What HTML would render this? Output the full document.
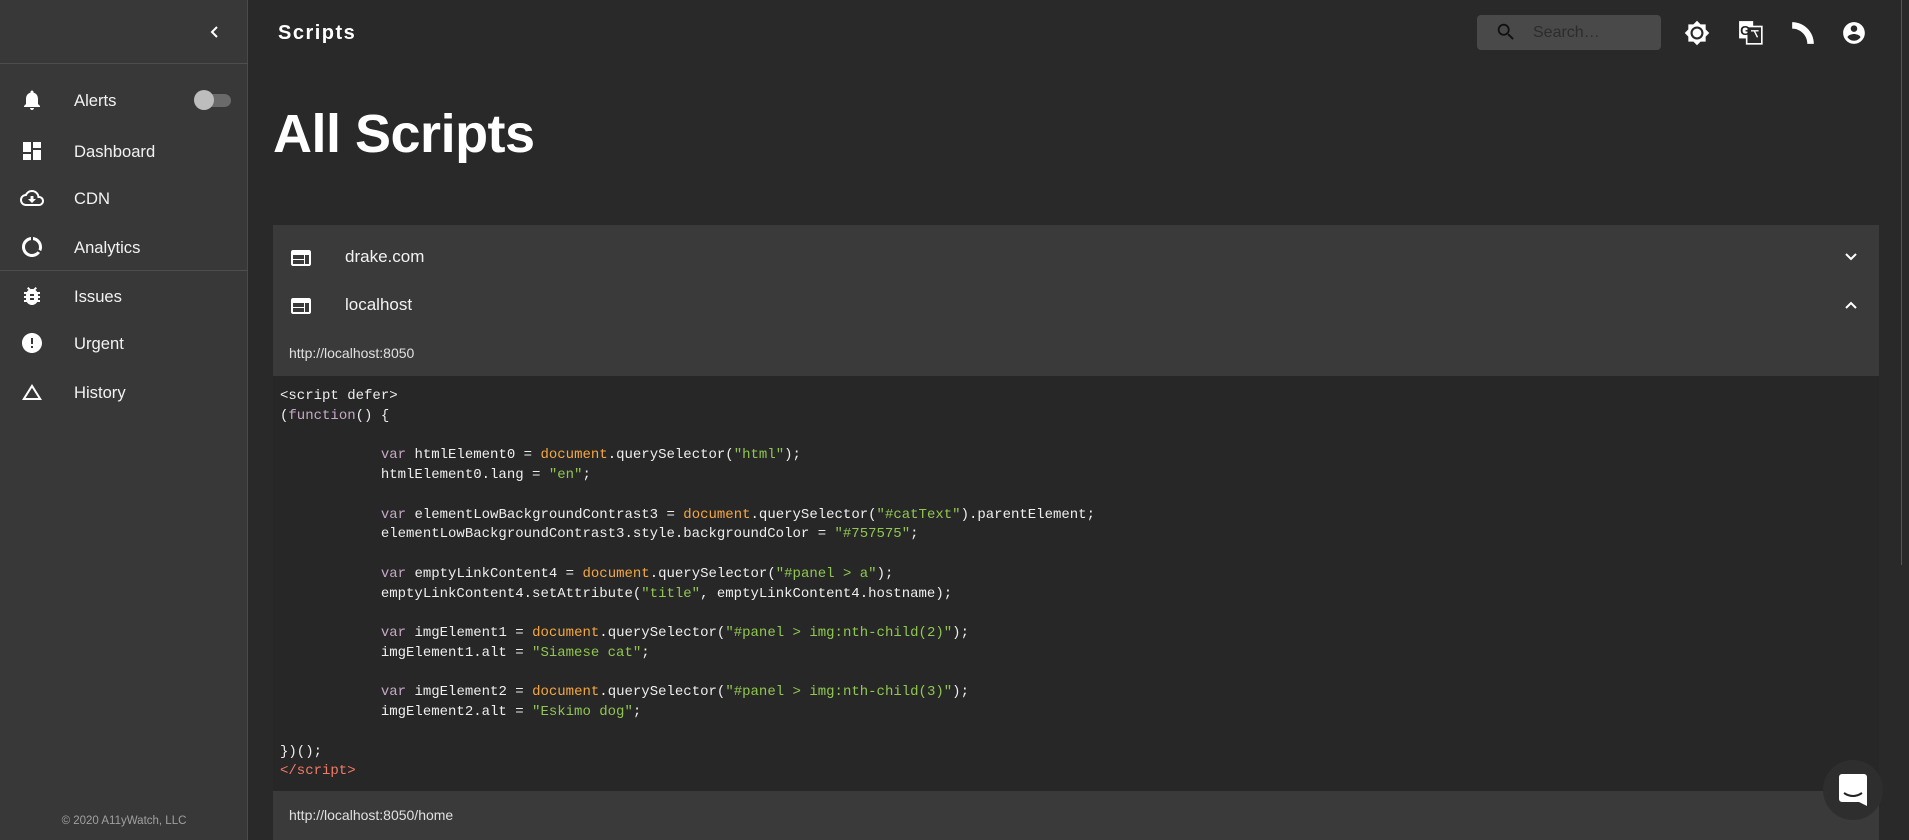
<!DOCTYPE html>
<html><head><meta charset="utf-8"><style>
*{margin:0;padding:0;box-sizing:border-box}
body{width:1909px;height:840px;overflow:hidden;background:#292929;font-family:"Liberation Sans",sans-serif;color:#fff;position:relative}
.side{position:absolute;left:0;top:0;width:248px;height:840px;background:#383838;border-right:1px solid #4a4a4a}
.hr{position:absolute;left:0;width:248px;height:1px;background:#4e4e4e}
.nav{position:absolute;left:0;width:248px;height:40px}
.nav svg{position:absolute;left:20px;top:8px}
.nav span{position:absolute;left:74px;top:11px;font-size:16.6px;color:#f2f2f2}
.abs{position:absolute}
.code{position:absolute;left:280px;top:387px;font-family:"Liberation Mono",monospace;font-size:14px;line-height:19.75px;color:#eee;white-space:pre}
.k{color:#c6a8c6}.d{color:#f5a742}.s{color:#8fc750}.t{color:#f47a65}
</style></head><body>
<div class="side">
  <svg class="abs" style="left:208px;top:25px" width="14" height="14" viewBox="0 0 14 14"><path d="M9 2 L4 7 L9 12" stroke="#fff" stroke-width="2" fill="none"/></svg>
  <div class="hr" style="top:63px"></div>
  <div class="nav" style="top:80px"><svg width="24" height="24" viewBox="0 0 24 24" fill="#fff"><path d="M12 22c1.1 0 2-.9 2-2h-4c0 1.1.9 2 2 2zm6-6v-5c0-3.07-1.64-5.640-4.5-6.32V4c0-.83-.67-1.5-1.5-1.5s-1.5.67-1.5 1.5v.68C7.63 5.36 6 7.92 6 11v5l-2 2v1h16v-1l-2-2z"/></svg><span>Alerts</span>
    <div class="abs" style="left:197px;top:14px;width:34px;height:13px;border-radius:7px;background:#6a6a6a"></div>
    <div class="abs" style="left:194px;top:10px;width:20px;height:20px;border-radius:50%;background:#bdbdbd"></div></div>
  <div class="nav" style="top:131px"><svg width="24" height="24" viewBox="0 0 24 24" fill="#fff"><path d="M3 13h8V3H3v10zm0 8h8v-6H3v6zm10 0h8V11h-8v10zm0-18v6h8V3h-8z"/></svg><span>Dashboard</span></div>
  <div class="nav" style="top:178px"><svg width="24" height="24" viewBox="0 0 24 24" fill="#fff"><path d="M19.35 10.04C18.670 6.59 15.64 4 12 4 9.11 4 6.6 5.64 5.35 8.04 2.34 8.36 0 10.91 0 14c0 3.31 2.69 6 6 6h13c2.76 0 5-2.24 5-5 0-2.64-2.05-4.78-4.65-4.96zM19 18H6c-2.21 0-4-1.790-4-4s1.79-4 4-4h.71C7.37 7.69 9.48 6 12 6c3.04 0 5.5 2.46 5.5 5.5v.5H19c1.66 0 3 1.34 3 3s-1.34 3-3 3zm-5.55-8h-2.9v3H8l4 4 4-4h-2.55z"/></svg><span>CDN</span></div>
  <div class="nav" style="top:227px"><svg width="24" height="24" viewBox="0 0 24 24" fill="#fff"><path d="M13 2.05v3.03c3.39.49 6 3.39 6 6.92 0 .9-.18 1.75-.48 2.54l2.6 1.53c.56-1.24.88-2.62.88-4.07 0-5.18-3.95-9.45-9-9.95zM12 19c-3.87 0-7-3.13-7-7 0-3.53 2.61-6.43 6-6.92V2.05c-5.06.5-9 4.76-9 9.95 0 5.52 4.47 10 9.99 10 3.31 0 6.24-1.61 8.06-4.09l-2.6-1.53C16.17 17.98 14.21 19 12 19z"/></svg><span>Analytics</span></div>
  <div class="hr" style="top:270px"></div>
  <div class="nav" style="top:276px"><svg width="24" height="24" viewBox="0 0 24 24" fill="#fff"><path d="M20 8h-2.81c-.45-.78-1.07-1.45-1.82-1.96L17 4.41 15.59 3l-2.17 2.17C12.96 5.06 12.49 5 12 5s-.96.06-1.41.17L8.41 3 7 4.41l1.62 1.63C7.88 6.55 7.26 7.22 6.81 8H4v2h2.09c-.05.33-.09.66-.09 1v1H4v2h2v1c0 .34.04.67.09 1H4v2h2.81c1.04 1.79 2.97 3 5.19 3s4.15-1.21 5.19-3H20v-2h-2.09c.05-.33.09-.66.09-1v-1h2v-2h-2v-1c0-.34-.04-.67-.09-1H20V8zm-6 8h-4v-2h4v2zm0-4h-4v-2h4v2z"/></svg><span>Issues</span></div>
  <div class="nav" style="top:323px"><svg width="24" height="24" viewBox="0 0 24 24" fill="#fff"><path d="M12 2C6.48 2 2 6.48 2 12s4.48 10 10 10 10-4.48 10-10S17.52 2 12 2zm1 15h-2v-2h2v2zm0-4h-2V7h2v6z"/></svg><span>Urgent</span></div>
  <div class="nav" style="top:372px"><svg width="24" height="24" viewBox="0 0 24 24" fill="#fff"><path d="M12 7.77L18.39 18H5.61L12 7.77M12 4L2 20h20L12 4z"/></svg><span>History</span></div>
  <div class="abs" style="left:0;width:248px;top:815px;text-align:center;font-size:11.5px;color:#a0a0a0">© 2020 A11yWatch, LLC</div>
</div>

<div class="abs" style="left:278px;top:22px;font-size:20px;font-weight:bold;letter-spacing:1.5px">Scripts</div>
<div class="abs" style="left:1477px;top:15px;width:184px;height:35px;background:#494949;border-radius:4px">
  <svg class="abs" style="left:18px;top:6px" width="22" height="22" viewBox="0 0 24 24" fill="#111"><path d="M15.5 14h-.79l-.28-.27C15.41 12.59 16 11.11 16 9.5 16 5.91 13.09 3 9.5 3S3 5.91 3 9.5 5.91 16 9.5 16c1.61 0 3.09-.59 4.23-1.57l.27.28v.79l5 4.99L20.49 19l-4.99-5zm-6 0C7.01 14 5 11.99 5 9.5S7.01 5 9.5 5 14 7.01 14 9.5 11.99 14 9.5 14z"/></svg>
  <span class="abs" style="left:56px;top:9px;font-size:16px;color:#2c2c2c">Search…</span>
</div>
<svg class="abs" style="left:1684px;top:20px" width="26" height="26" viewBox="0 0 24 24" fill="#fff"><path d="M20 8.69V4h-4.69L12 .69 8.69 4H4v4.69L.69 12 4 15.31V20h4.69L12 23.31 15.31 20H20v-4.69L23.31 12 20 8.69zM12 18c-3.31 0-6-2.69-6-6s2.69-6 6-6 6 2.69 6 6-2.69 6-6 6zm0-10c-2.21 0-4 1.79-4 4s1.79 4 4 4 4-1.79 4-4-1.79-4-4-4z"/></svg>
<svg class="abs" style="left:1738px;top:20px" width="26" height="26" viewBox="0 0 24 24"><rect x="1" y="1" width="13" height="16" fill="#fff"/><rect x="8" y="6" width="14" height="16" fill="#292929" stroke="#fff" stroke-width="1.5"/><text x="2" y="14" font-size="12" font-weight="bold" fill="#222" font-family="Liberation Sans">G</text><path d="M12 10h7M15 10l3 6" stroke="#fff" stroke-width="1.3" fill="none"/></svg>
<svg class="abs" style="left:1790px;top:20px" width="26" height="26" viewBox="0 0 24 24" fill="#fff"><path d="M2 2c11 0 20 9 20 20h-6c0-7.7-6.3-14-14-14z"/></svg>
<svg class="abs" style="left:1841px;top:20px" width="26" height="26" viewBox="0 0 24 24" fill="#fff"><path d="M12 2C6.48 2 2 6.48 2 12s4.48 10 10 10 10-4.48 10-10S17.52 2 12 2zm0 3c1.66 0 3 1.34 3 3s-1.34 3-3 3-3-1.34-3-3 1.34-3 3-3zm0 14.2c-2.5 0-4.71-1.28-6-3.22.03-1.99 4-3.08 6-3.08 1.99 0 5.970 1.09 6 3.08-1.29 1.94-3.5 3.22-6 3.22z"/></svg>

<div class="abs" style="left:273px;top:103px;font-size:54px;font-weight:bold;letter-spacing:-0.5px">All Scripts</div>

<div class="abs" style="left:273px;top:225px;width:1606px;height:151px;background:#3a3a3a"></div>
<svg class="abs" style="left:289px;top:246px" width="24" height="24" viewBox="0 0 24 24" fill="#fff"><path d="M20 4H4c-1.1 0-2 .9-2 2v12c0 1.1.9 2 2 2h16c1.1 0 2-.9 2-2V6c0-1.1-.9-2-2-2zm-5 14H4v-4h11v4zm0-5H4V9h11v4zm5 5h-4V9h4v9z"/></svg>
<div class="abs" style="left:345px;top:247px;font-size:17px;color:#f2f2f2">drake.com</div>
<svg class="abs" style="left:289px;top:294px" width="24" height="24" viewBox="0 0 24 24" fill="#fff"><path d="M20 4H4c-1.1 0-2 .9-2 2v12c0 1.1.9 2 2 2h16c1.1 0 2-.9 2-2V6c0-1.1-.9-2-2-2zm-5 14H4v-4h11v4zm0-5H4V9h11v4zm5 5h-4V9h4v9z"/></svg>
<div class="abs" style="left:345px;top:295px;font-size:17px;color:#f2f2f2">localhost</div>
<svg class="abs" style="left:1843px;top:249px" width="16" height="16" viewBox="0 0 16 16"><path d="M3 5l5 5 5-5" stroke="#fff" stroke-width="2" fill="none"/></svg>
<svg class="abs" style="left:1843px;top:297px" width="16" height="16" viewBox="0 0 16 16"><path d="M3 11l5-5 5 5" stroke="#fff" stroke-width="2" fill="none"/></svg>
<div class="abs" style="left:289px;top:345px;font-size:14px;color:#e0e0e0">http://localhost:8050</div>

<div class="abs" style="left:273px;top:376px;width:1606px;height:415px;background:#272727"></div>
<div class="code">&lt;script defer&gt;
(<span class="k">function</span>() {

            <span class="k">var</span> htmlElement0 = <span class="d">document</span>.querySelector(<span class="s">"html"</span>);
            htmlElement0.lang = <span class="s">"en"</span>;

            <span class="k">var</span> elementLowBackgroundContrast3 = <span class="d">document</span>.querySelector(<span class="s">"#catText"</span>).parentElement;
            elementLowBackgroundContrast3.style.backgroundColor = <span class="s">"#757575"</span>;

            <span class="k">var</span> emptyLinkContent4 = <span class="d">document</span>.querySelector(<span class="s">"#panel &gt; a"</span>);
            emptyLinkContent4.setAttribute(<span class="s">"title"</span>, emptyLinkContent4.hostname);

            <span class="k">var</span> imgElement1 = <span class="d">document</span>.querySelector(<span class="s">"#panel &gt; img:nth-child(2)"</span>);
            imgElement1.alt = <span class="s">"Siamese cat"</span>;

            <span class="k">var</span> imgElement2 = <span class="d">document</span>.querySelector(<span class="s">"#panel &gt; img:nth-child(3)"</span>);
            imgElement2.alt = <span class="s">"Eskimo dog"</span>;

})();
<span class="t">&lt;/script&gt;</span></div>

<div class="abs" style="left:273px;top:791px;width:1606px;height:49px;background:#3a3a3a"></div>
<div class="abs" style="left:289px;top:807px;font-size:14px;color:#e0e0e0">http://localhost:8050/home</div>

<div class="abs" style="left:1901px;top:0;width:1px;height:565px;background:#555"></div>
<div class="abs" style="left:1823px;top:760px;width:60px;height:60px;border-radius:50%;background:#2e2e2e"></div>
<svg class="abs" style="left:1839px;top:774px" width="28" height="32" viewBox="0 0 28 32"><path d="M3 0h22a3 3 0 0 1 3 3v29l-8-4H3a3 3 0 0 1-3-3V3a3 3 0 0 1 3-3z" fill="#fff"/><path d="M5 19q9 6 18 0" stroke="#222" stroke-width="2" fill="none"/></svg>
</body></html>
